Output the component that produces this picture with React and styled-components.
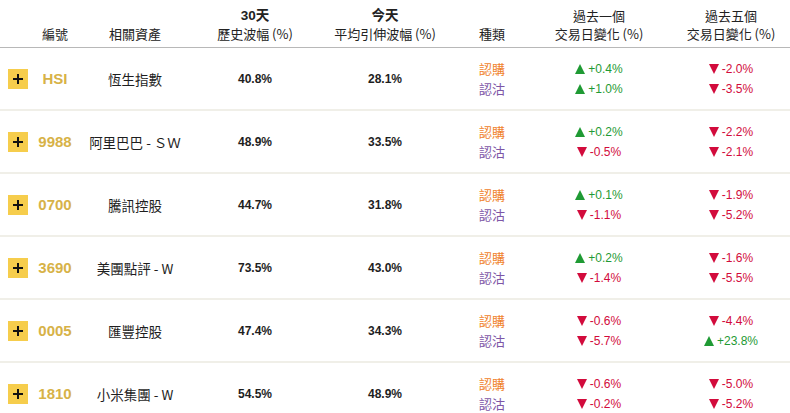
import React from "react";
import styled, { createGlobalStyle } from "styled-components";

const GlobalStyle = createGlobalStyle`
  body {
    margin: 0;
    background: #fff;
    font-family: "Liberation Sans", "Noto Sans CJK TC", sans-serif;
    color: #1e1e1e;
  }
`;

const rows = [
  { code: "HSI", name: "恆生指數", hv: "40.8%", iv: "28.1%", d1: ["+0.4%", "+1.0%"], d5: ["-2.0%", "-3.5%"] },
  { code: "9988", name: "阿里巴巴 - ＳＷ", hv: "48.9%", iv: "33.5%", d1: ["+0.2%", "-0.5%"], d5: ["-2.2%", "-2.1%"] },
  { code: "0700", name: "騰訊控股", hv: "44.7%", iv: "31.8%", d1: ["+0.1%", "-1.1%"], d5: ["-1.9%", "-5.2%"] },
  { code: "3690", name: "美團點評 - W", hv: "73.5%", iv: "43.0%", d1: ["+0.2%", "-1.4%"], d5: ["-1.6%", "-5.5%"] },
  { code: "0005", name: "匯豐控股", hv: "47.4%", iv: "34.3%", d1: ["-0.6%", "-5.7%"], d5: ["-4.4%", "+23.8%"] },
  { code: "1810", name: "小米集團 - W", hv: "54.5%", iv: "48.9%", d1: ["-0.6%", "-0.2%"], d5: ["-5.0%", "-5.2%"] },
];

const cols = "30px 50px 110px 130px 130px 84px 130px 126px";

const Table = styled.div`
  width: 790px;
`;

const HeadRow = styled.div`
  display: grid;
  grid-template-columns: ${cols};
  height: 48px;
  border-bottom: 1px solid #b8b8b8;
  box-sizing: border-box;
`;

const HeadCell = styled.div`
  display: flex;
  flex-direction: column;
  justify-content: flex-end;
  align-items: center;
  padding-bottom: 4px;
  padding-left: ${p => (p.$shift ? "8px" : "0")};
  font-family: "Noto Sans CJK TC", sans-serif;
  font-size: 13px;
  line-height: 18px;
  color: #222;

  b {
    font-family: "Liberation Sans", "Noto Sans CJK TC", sans-serif;
    font-size: 13.5px;
    font-weight: bold;
  }
`;

const Row = styled.div`
  display: grid;
  grid-template-columns: ${cols};
  height: 63px;
  align-items: center;
  border-bottom: 2px solid #f0efe8;
  box-sizing: border-box;
`;

const PlusButton = styled.div`
  width: 20px;
  height: 20px;
  margin-left: 8px;
  background: #f6cd4c;
  display: flex;
  align-items: center;
  justify-content: center;
`;

const Code = styled.div`
  text-align: center;
  font-size: 15px;
  font-weight: bold;
  color: #d7b247;
`;

const Name = styled.div`
  text-align: center;
  font-family: "Noto Sans CJK TC", sans-serif;
  font-size: 13.5px;
  color: #1e1e1e;
  white-space: nowrap;
`;

const Value = styled.div`
  text-align: center;
  font-size: 12px;
  font-weight: bold;
`;

const Stack = styled.div`
  display: flex;
  flex-direction: column;
  align-items: center;
  padding-left: ${p => (p.$shift ? "8px" : "0")};
  line-height: 20px;
`;

const Kind = styled.span`
  font-family: "Noto Sans CJK TC", sans-serif;
  font-size: 13px;
  color: ${p => p.$color};
`;

const Change = styled.span`
  display: flex;
  align-items: center;
  gap: 3px;
  font-size: 12px;
  color: ${p => (p.$up ? "#1f9a34" : "#d20b3c")};
`;

const Arrow = styled.span`
  width: 0;
  height: 0;
  border-left: 5.5px solid transparent;
  border-right: 5.5px solid transparent;
  ${p =>
    p.$up
      ? "border-bottom: 10px solid #1f9a34;"
      : "border-top: 10px solid #d20b3c;"}
`;

const Plus = () => (
  <svg width="12" height="12" viewBox="0 0 12 12">
    <path d="M6 1v10M1 6h10" stroke="#111" strokeWidth="2" />
  </svg>
);

const Delta = ({ v }) => {
  const up = v.startsWith("+");
  return (
    <Change $up={up}>
      <Arrow $up={up} />
      {v}
    </Change>
  );
};

export default function App() {
  return (
    <Table>
      <GlobalStyle />
      <HeadRow>
        <HeadCell />
        <HeadCell>編號</HeadCell>
        <HeadCell>相關資產</HeadCell>
        <HeadCell>
          <b>30天</b>
          <span>歷史波幅 (%)</span>
        </HeadCell>
        <HeadCell>
          <b>今天</b>
          <span>平均引伸波幅 (%)</span>
        </HeadCell>
        <HeadCell>種類</HeadCell>
        <HeadCell>
          <span>過去一個</span>
          <span>交易日變化 (%)</span>
        </HeadCell>
        <HeadCell $shift>
          <span>過去五個</span>
          <span>交易日變化 (%)</span>
        </HeadCell>
      </HeadRow>
      {rows.map(r => (
        <Row key={r.code}>
          <PlusButton>
            <Plus />
          </PlusButton>
          <Code>{r.code}</Code>
          <Name>{r.name}</Name>
          <Value>{r.hv}</Value>
          <Value>{r.iv}</Value>
          <Stack>
            <Kind $color="#f0822c">認購</Kind>
            <Kind $color="#7e56a6">認沽</Kind>
          </Stack>
          <Stack>
            {r.d1.map((v, i) => <Delta key={i} v={v} />)}
          </Stack>
          <Stack $shift>
            {r.d5.map((v, i) => <Delta key={i} v={v} />)}
          </Stack>
        </Row>
      ))}
    </Table>
  );
}
